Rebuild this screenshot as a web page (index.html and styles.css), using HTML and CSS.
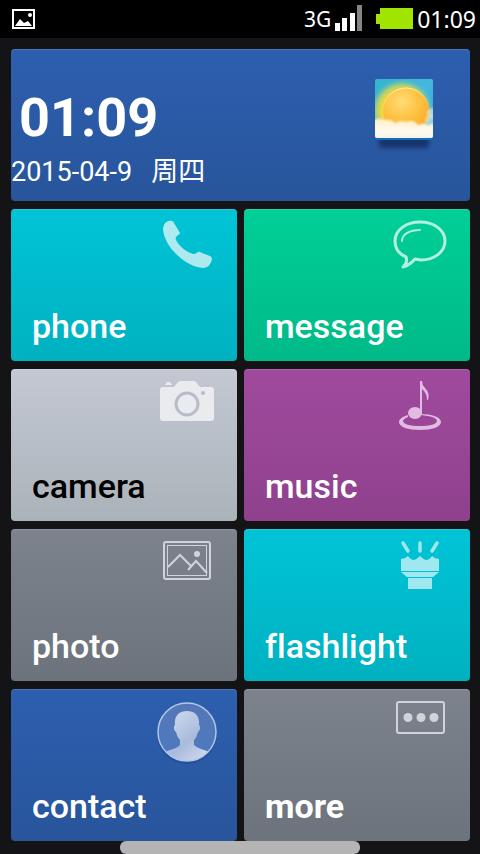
FILE: index.html
```
<!DOCTYPE html>
<html lang="en">
<head>
<meta charset="utf-8">
<meta name="viewport" content="width=device-width, initial-scale=1">
<title>Home</title>
<link rel="stylesheet" href="styles.css">
</head>
<body>
<header class="status">
  <svg class="status-picture" viewBox="0 0 24 22" aria-hidden="true">
    <rect x="1" y="2" width="21" height="18" fill="none" stroke="#fff" stroke-width="2"/>
    <path d="M3 18L8 11L12 15L16 13L20 18Z" fill="#fff"/>
    <circle cx="18" cy="7" r="2" fill="#fff"/>
  </svg>
  <div class="status-right">
    <span class="network">3G</span>
    <svg class="signal" viewBox="0 0 27 26" aria-hidden="true">
      <path d="M0 17h5v8H0zM7 12h5v13H7zM15 7h5v18h-5z" fill="#fff"/>
      <path d="M22 -1h5v26h-5z" fill="#858585"/>
    </svg>
    <svg class="battery" viewBox="0 0 37 22" aria-hidden="true">
      <path d="M4 0H37V21H4V16H0V6H4Z" fill="#a0e400"/>
    </svg>
    <time class="clock">01:09</time>
  </div>
</header>
<main class="home">
  <section class="hero blue">
    <div class="datetime">
      <time class="time">01:09</time>
      <div class="date"><span>2015-04-9</span><span lang="zh">周四</span></div>
    </div>
    <svg class="weather" viewBox="0 0 66 76" aria-hidden="true">
      <defs>
        <linearGradient id="sky" x1="0" y1="0" x2="1" y2="1">
          <stop offset="0" stop-color="#35b4cc"/><stop offset=".5" stop-color="#45b8dc"/><stop offset="1" stop-color="#2a9fe0"/>
        </linearGradient>
        <radialGradient id="glow">
          <stop offset=".6" stop-color="#ffd93a"/><stop offset=".8" stop-color="#d5d850" stop-opacity=".75"/><stop offset="1" stop-color="#6fc6b0" stop-opacity="0"/>
        </radialGradient>
        <radialGradient id="sun" cx=".4" cy=".3" r=".75">
          <stop offset="0" stop-color="#ffdc74"/><stop offset=".5" stop-color="#fec344"/><stop offset="1" stop-color="#f9a426"/>
        </radialGradient>
        <linearGradient id="rim" x1="0" y1="0" x2="0" y2="1">
          <stop offset="0" stop-color="#fff3a0"/><stop offset=".5" stop-color="#ffdf70" stop-opacity="0"/>
        </linearGradient>
        <linearGradient id="cloud" x1="0" y1="0" x2="0" y2="1">
          <stop offset="0" stop-color="#ffefcb"/><stop offset=".6" stop-color="#fffaf0"/><stop offset="1" stop-color="#f3efe6"/>
        </linearGradient>
        <clipPath id="card"><rect x="4" y="2" width="58" height="59" rx="2"/></clipPath>
        <filter id="soft" x="-20%" y="-60%" width="140%" height="220%"><feGaussianBlur stdDeviation="2"/></filter>
        <filter id="puff" x="-10%" y="-20%" width="120%" height="140%"><feGaussianBlur stdDeviation="1"/></filter>
      </defs>
      <rect x="8" y="59" width="50" height="12" rx="3" fill="#132f63" opacity=".85" filter="url(#soft)"/>
      <rect x="4" y="6" width="58" height="57" rx="2" fill="#1470b4"/>
      <g clip-path="url(#card)">
        <rect x="4" y="2" width="58" height="59" fill="url(#sky)"/>
        <circle cx="31" cy="34" r="32" fill="url(#glow)"/>
        <circle cx="35" cy="34" r="23" fill="url(#sun)" stroke="url(#rim)" stroke-width="1"/>
        <g fill="url(#cloud)" filter="url(#puff)">
          <path d="M2 44Q6 40 13 43Q20 42 24 46Q30 43 36 45Q42 42 47 48Q53 45 57 48L64 46V64H2Z"/>
          <circle cx="61" cy="36" r="5" opacity=".55"/>
          <circle cx="59" cy="43" r="5" opacity=".5"/>
        </g>
      </g>
    </svg>
  </section>
  <nav class="tiles">
    <a class="tile cyan" href="#phone">
      <svg class="icon" viewBox="-13 4 100 80" aria-hidden="true">
        <path d="M14 20C15 17 19 15 22 16Q23 16 24 18L30 28Q30 29 27 31Q25 32 26 35C29 41 36 47 43 49Q46 49 48 47Q49 46 52 48L60 51Q62 52 62 54C61 59 58 63 53 63C36 62 14 42 13 24Q13 22 14 20Z" fill="#fff" fill-opacity=".68"/>
      </svg>
      <span class="label">phone</span>
    </a>
    <a class="tile green" href="#message">
      <svg class="icon" viewBox="-10 4 100 80" aria-hidden="true">
        <g fill="none" stroke="#fff" stroke-opacity=".7" stroke-linejoin="round" stroke-linecap="round">
          <path d="M26 52C19 49 15 43 15 36C15 25 26 17 40 17C54 17 65 25 65 36C65 47 54 55 41 55L35 54Q30 60 23 62Q28 58 26 52Z" stroke-width="3"/>
          <path d="M22 36C22 29 30 25 40 25" stroke-width="2"/>
        </g>
      </svg>
      <span class="label">message</span>
    </a>
    <a class="tile silver" href="#camera">
      <svg class="icon" viewBox="-13 4 100 80" aria-hidden="true">
        <path d="M13 22Q10 22 10 25V53Q10 56 13 56H61Q64 56 64 53V25Q64 22 61 22H50L46 17Q45 16 43 16H31Q29 16 28 17L24 22Z" fill="#e9ebef"/>
        <path d="M15 20L17 17H20L22 20Z" fill="#e9ebef"/>
        <circle cx="37" cy="39" r="11" fill="none" stroke="#b7bdc6" stroke-width="3"/>
        <circle cx="53" cy="28" r="2" fill="#b7bdc6"/>
      </svg>
      <span class="label">camera</span>
    </a>
    <a class="tile purple" href="#music">
      <svg class="icon" viewBox="-10 4 100 80" aria-hidden="true">
        <g fill="#e3bbe1">
          <path d="M40 49C52 49 61 52 61 57C61 62 52 65 40 65C28 65 19 62 19 57C19 54 22 52 28 50V52C25 53 23 55 23 56C23 59 30 61 40 61C50 61 57 59 57 56C57 53 51 51 41 50Z"/>
          <ellipse cx="35" cy="48" rx="7" ry="6"/>
          <path d="M40 49V16H42Q42 20 45 23Q50 28 48 35L47 35Q47 28 42 24V49Z"/>
        </g>
      </svg>
      <span class="label">music</span>
    </a>
    <a class="tile grey" href="#photo">
      <svg class="icon" viewBox="-13 4 100 80" aria-hidden="true">
        <g fill="none" stroke="#d0d4da">
          <rect x="14" y="17" width="46" height="37" rx="2" stroke-width="2"/>
          <rect x="17.500" y="20.500" width="39" height="30" stroke-width="1"/>
          <path d="M18 42L30 30L42 42M38 45L46 36L57 48" stroke-width="2"/>
        </g>
        <circle cx="47" cy="29" r="3" fill="#d0d4da"/>
      </svg>
      <span class="label">photo</span>
    </a>
    <a class="tile cyan" href="#flashlight">
      <svg class="icon" viewBox="-10 4 100 80" aria-hidden="true">
        <path d="M23 18L28 26M40 18V26M57 18L52 26" stroke="#9fe8ef" stroke-width="3.500" stroke-linecap="round"/>
        <path d="M21 46V34Q25 34 28 31Q31 35 34 35Q37 34 40 31Q43 34 46 35Q49 35 52 31Q55 34 59 34V46ZM21 47H59L53 52H27ZM28 53H52V64H28Z" fill="#9fe8ef"/>
      </svg>
      <span class="label">flashlight</span>
    </a>
    <a class="tile blue" href="#contact">
      <svg class="icon" viewBox="-3 4 100 80" aria-hidden="true">
        <defs>
          <linearGradient id="person" x1="0" y1="0" x2="1" y2="1"><stop offset="0" stop-color="#dbe4f2"/><stop offset=".55" stop-color="#a9bbdc"/><stop offset="1" stop-color="#e3e9f5"/></linearGradient>
          <linearGradient id="disc" x1="0" y1="0" x2="0" y2="1"><stop offset="0" stop-color="#5478b6"/><stop offset="1" stop-color="#4d79c0"/></linearGradient>
          <clipPath id="round"><circle cx="47" cy="47" r="29"/></clipPath>
        </defs>
        <circle cx="47" cy="49" r="30" fill="#1d458a" opacity=".5"/>
        <circle cx="47" cy="47" r="29" fill="url(#disc)"/>
        <path clip-path="url(#round)" d="M35 40C34 31 39 26 47 26C55 26 60 31 59 40C61 41 60 46 58 47Q57 52 54 55V60Q57 63 67 66L78 78H16L27 66Q38 63 40 60V55Q37 52 36 47C34 46 33 41 35 40Z" fill="url(#person)"/>
        <circle cx="47" cy="47" r="29" fill="none" stroke="#b0c6ea" stroke-width="1.500"/>
      </svg>
      <span class="label">contact</span>
    </a>
    <a class="tile grey" href="#more">
      <svg class="icon" viewBox="-10 4 100 80" aria-hidden="true">
        <rect x="17" y="17" width="47" height="31" rx="2" fill="none" stroke="#d0d4da" stroke-width="2"/>
        <g fill="#d0d4da"><circle cx="28" cy="32.500" r="4.500"/><circle cx="41" cy="32.500" r="4.500"/><circle cx="54" cy="32.500" r="4.500"/></g>
      </svg>
      <span class="label strong">more</span>
    </a>
  </nav>
</main>
<div class="handle"></div>
</body>
</html>
```
FILE: styles.css
```
* { box-sizing: border-box; }

body {
  margin: 0;
  min-height: 100vh;
  display: flex;
  flex-direction: column;
  background: #141416;
  color: #fff;
  font-family: Roboto, "Noto Sans CJK SC", sans-serif;
  font-variant-ligatures: none;
}

.status {
  height: 38px;
  padding: 0 4px 0 12px;
  display: flex;
  align-items: center;
  justify-content: space-between;
  background: #000;
  font-family: "Noto Sans", sans-serif;
  font-size: 23px;
  line-height: 38px;
}

.status-picture { width: 24px; height: 22px; }

.status-right {
  display: flex;
  align-items: center;
  gap: 4px;
}

.network { font-size: 21px; }
.signal { width: 27px; height: 26px; overflow: visible; }
.battery { width: 37px; height: 22px; margin-left: 10px; }

.home {
  display: flex;
  flex-direction: column;
  gap: 8px;
  padding: 11px 10px 0 11px;
}

.hero, .tile {
  min-height: 152px;
  border-radius: 4px;
  box-shadow: inset 0 1px rgba(255, 255, 255, 0.15);
}

.hero {
  display: flex;
  justify-content: space-between;
  align-items: flex-start;
  padding: 28px 33px 0 0;
}

.datetime { padding-top: 9px; }

.time {
  display: block;
  padding-left: 8px;
  font-size: 54px;
  font-weight: 700;
  line-height: 64px;
}

.date {
  display: flex;
  gap: 19px;
  font-size: 27px;
  line-height: 44px;
}

.weather { width: 66px; height: 76px; }

.tiles {
  display: grid;
  grid-template-columns: 1fr 1fr;
  gap: 8px 7px;
}

.tile {
  display: flex;
  flex-direction: column;
  justify-content: space-between;
  color: #fff;
  text-decoration: none;
}

.icon {
  width: 100px;
  height: 80px;
  align-self: flex-end;
}

.label {
  padding: 0 0 14px 21px;
  font-size: 34px;
  font-weight: 500;
  line-height: 42px;
}

.strong { font-weight: 700; }

.blue { background: linear-gradient(#2d5fb0, #28559b); }
.cyan { background: linear-gradient(#00c4d6, #00b1c0); }
.green { background: linear-gradient(#00cf98, #00ba88); }
.silver { background: linear-gradient(#c3c8d2, #abb3ba); color: #000; }
.purple { background: linear-gradient(#a04a9e, #8f418d); }
.grey { background: linear-gradient(#7d838d, #6c737d); }

.handle {
  width: 50%;
  height: 13px;
  margin: 0 auto;
  border-radius: 6px;
  background: #b4b4b4;
}
```
